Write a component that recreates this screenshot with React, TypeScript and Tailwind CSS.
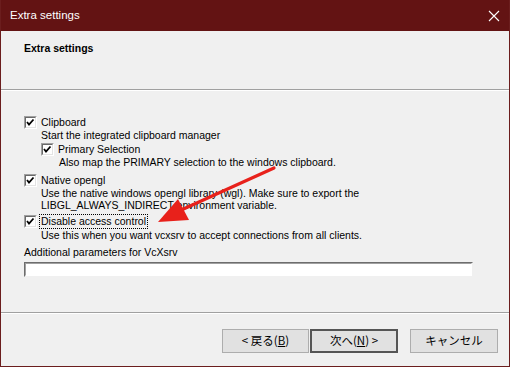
const body = { fontFamily: '"Liberation Sans", Arial, sans-serif' };
const jp = { fontFamily: '"Noto Sans CJK JP", "Noto Sans", sans-serif' };

const CheckBox = () => (
  <span className="flex h-[13px] w-[13px] shrink-0 items-center justify-center border border-t-[#a0a0a0] border-l-[#a0a0a0] border-b-white border-r-white">
    <span className="flex h-[11px] w-[11px] items-center justify-center border border-t-[#696969] border-l-[#696969] border-b-[#e3e3e3] border-r-[#e3e3e3] bg-white">
      <svg width="9" height="9" viewBox="0 0 9 9">
        <path d="M1 4 L3 6.5 L7.5 1.5" fill="none" stroke="#000" strokeWidth="1.8" />
      </svg>
    </span>
  </span>
);

const Row = ({ label, focus }: { label: string; focus?: boolean }) => (
  <div className="flex h-[14px] items-center gap-[3px]">
    <CheckBox />
    <span
      className={
        "px-[1px] text-[10.5px] leading-[13px] text-black " +
        (focus ? "outline outline-1 outline-dotted outline-black" : "")
      }
    >
      {label}
    </span>
  </div>
);

const Desc = ({ children }: { children: React.ReactNode }) => (
  <div className="text-[10.5px] leading-[12px] text-black">{children}</div>
);

export default function App() {
  return (
    <div className="relative flex h-[367px] w-[510px] flex-col border-x border-b border-[#6b1d1d] bg-[#f0f0f0]" style={body}>
      {/* title bar */}
      <div className="flex h-[31px] shrink-0 items-center justify-between bg-[#631313] pl-[9px] pr-[9px]">
        <span className="text-[11.5px] text-white">Extra settings</span>
        <svg width="12" height="12" viewBox="0 0 12 12" className="mr-[0px]">
          <path d="M1 1 L11 11 M11 1 L1 11" stroke="#fff" strokeWidth="1.1" />
        </svg>
      </div>

      {/* header */}
      <div className="flex h-[58px] shrink-0 items-start pl-[23px] pt-[10px]">
        <span className="text-[10.5px] font-bold leading-[14px] text-black">Extra settings</span>
      </div>
      <div className="h-px shrink-0 bg-[#a0a0a0]" />
      <div className="h-px shrink-0 bg-white" />

      {/* body */}
      <div className="flex flex-1 flex-col pl-[23px] pt-[24px]">
        <Row label="Clipboard" />
        <div className="pl-[17px]">
          <Desc>Start the integrated clipboard manager</Desc>
          <div className="mt-[1px]">
            <Row label="Primary Selection" />
          </div>
          <div className="pl-[18px]">
            <Desc>Also map the PRIMARY selection to the windows clipboard.</Desc>
          </div>
        </div>
        <div className="mt-[5px]">
          <Row label="Native opengl" />
        </div>
        <div className="pl-[17px]">
          <Desc>Use the native windows opengl library (wgl). Make sure to export the</Desc>
          <Desc>LIBGL_ALWAYS_INDIRECT environment variable.</Desc>
        </div>
        <div className="mt-[3px]">
          <Row label="Disable access control" focus />
        </div>
        <div className="mt-[1px] pl-[17px]">
          <Desc>Use this when you want vcxsrv to accept connections from all clients.</Desc>
        </div>
        <div className="mt-[5px]">
          <Desc>Additional parameters for VcXsrv</Desc>
        </div>
        <div className="mt-[4px] h-[15px] w-[449px] border border-t-[#6d6d6d] border-l-[#6d6d6d] border-b-[#f0f0f0] border-r-[#f0f0f0]">
          <div className="h-full w-full border border-t-[#a0a0a0] border-l-[#a0a0a0] border-b-white border-r-white bg-white" />
        </div>
      </div>

      <div className="h-px shrink-0 bg-[#a0a0a0]" />
      <div className="h-px shrink-0 bg-white" />

      {/* footer */}
      <div className="flex h-[52px] shrink-0 items-start justify-end pr-[11px] pt-[15px]" style={jp}>
        <div className="flex">
          <button className="flex h-[24px] w-[87px] items-center justify-center border border-[#adadad] bg-[#e1e1e1] text-[11.5px] text-black">
            &lt; 戻る(<span className="underline">B</span>)
          </button>
          <button className="ml-px flex h-[24px] w-[88px] items-center justify-center border-2 border-[#555555] bg-[#e1e1e1] text-[11.5px] text-black">
            次へ(<span className="underline">N</span>) &gt;
          </button>
        </div>
        <button className="ml-[12px] flex h-[24px] w-[88px] items-center justify-center border border-[#adadad] bg-[#e1e1e1] text-[11.5px] text-black">
          キャンセル
        </button>
      </div>

      {/* red annotation arrow */}
      <svg className="pointer-events-none absolute left-0 top-0" width="510" height="367" viewBox="0 0 510 367">
        <line x1="273" y1="168" x2="178" y2="211" stroke="#e8211b" strokeWidth="3.2" strokeLinecap="round" />
        <polygon points="157,222 177,199 188,220" fill="#e8211b" />
      </svg>
    </div>
  );
}
